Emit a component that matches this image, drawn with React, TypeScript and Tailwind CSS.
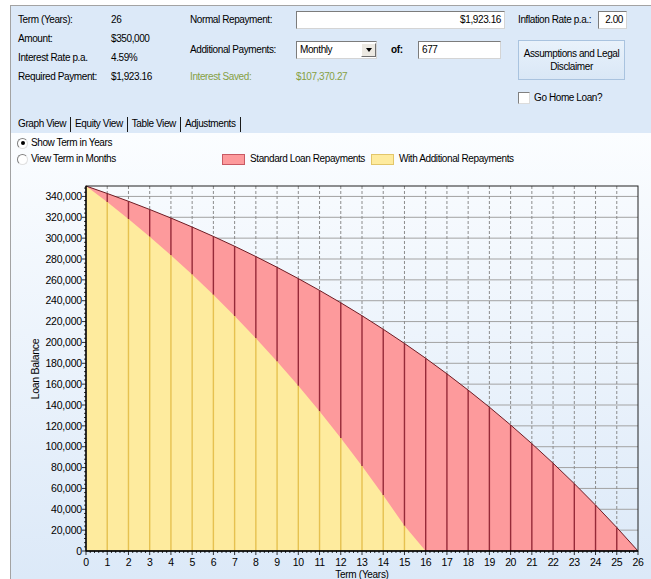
import React from 'react';

const FONT = "'Liberation Sans',Arial,sans-serif";

// chart frame, in page pixels
const X0 = 86;
const X1 = 638;
const Y0 = 551;
const Y1 = 186;
const sx = (t: number) => X0 + (t * (X1 - X0)) / 26;
const sy = (v: number) => Y0 - (v * (Y0 - Y1)) / 350000;

function balances(pay: number) {
  const r = 0.0459 / 12;
  let b = 350000;
  const out = [b];
  for (let y = 1; y <= 26; y++) {
    for (let m = 0; m < 12; m++) {
      b = b * (1 + r) - pay;
      if (b < 0) b = 0;
    }
    out.push(b);
  }
  return out;
}

const std = balances(1923.16);
const add = balances(1923.16 + 677);

const Sunken: React.FC<{ className?: string; children?: React.ReactNode }> = ({ className = '', children }) => (
  <div
    className={`h-[18px] bg-white border border-t-[#7c7c7c] border-l-[#7c7c7c] border-b-[#d4d4d4] border-r-[#d4d4d4] flex items-center px-[3px] ${className}`}
  >
    {children}
  </div>
);

const Chart: React.FC = () => {
  const years = Array.from({ length: 27 }, (_, i) => i);
  const gridV = Array.from({ length: 17 }, (_, i) => (i + 1) * 20000);
  const minorY = Array.from({ length: 88 }, (_, i) => i * 4000);
  const minorX = Array.from({ length: 131 }, (_, i) => i * 0.2);

  const stdPts = years.map((i) => `${sx(i)},${sy(std[i])}`).join(' ');
  const addPts = years.map((i) => `${sx(i)},${sy(add[i])}`).join(' ');
  const base = `${sx(26)},${Y0} ${sx(0)},${Y0}`;

  return (
    <svg width={640} height={412} viewBox="11 167 640 412" fontFamily={FONT} fontSize={10.5}>
      {/* grid */}
      {gridV.map((v) => (
        <line key={v} x1={X0} x2={X1} y1={sy(v)} y2={sy(v)} stroke="#a3a3a3" strokeWidth={1} />
      ))}
      {years.slice(1, 26).map((i) => (
        <line key={i} x1={sx(i)} x2={sx(i)} y1={Y1} y2={Y0} stroke="#8c8c8c" strokeWidth={1} strokeDasharray="3 2" />
      ))}

      {/* areas */}
      <polygon points={`${stdPts} ${base}`} fill="#fd9a9c" />
      <polygon points={`${addPts} ${base}`} fill="#feeb9e" />

      {years.slice(1, 26).map((i) => (
        <g key={i}>
          <line x1={sx(i)} x2={sx(i)} y1={sy(std[i])} y2={sy(add[i])} stroke="#962a38" strokeWidth={1.4} />
          {add[i] > 0 && (
            <line x1={sx(i)} x2={sx(i)} y1={sy(add[i])} y2={Y0} stroke="#e6c150" strokeWidth={1.4} />
          )}
        </g>
      ))}
      <polyline points={stdPts} fill="none" stroke="#6e1c24" strokeWidth={1} />

      {/* frame */}
      <rect x={X0} y={Y1} width={X1 - X0} height={Y0 - Y1} fill="none" stroke="#222" strokeWidth={1} />
      <line x1={X0} x2={X0} y1={Y1} y2={Y0} stroke="#000" strokeWidth={1.3} />
      <line x1={X0} x2={X1} y1={Y0} y2={Y0} stroke="#000" strokeWidth={1.3} />

      {/* y ticks */}
      {minorY.map((v) => (
        <line key={v} x1={v % 20000 === 0 ? X0 - 4 : X0 - 2} x2={X0} y1={sy(v)} y2={sy(v)} stroke="#000" strokeWidth={0.8} />
      ))}
      {[0, ...gridV].map((v) => (
        <text key={v} x={82} y={sy(v)} dy="0.36em" textAnchor="end" fill="#000" letterSpacing={-0.2}>
          {v.toLocaleString('en-US')}
        </text>
      ))}

      {/* x ticks */}
      {minorX.map((t, k) => (
        <line key={k} x1={sx(t)} x2={sx(t)} y1={Y0} y2={k % 5 === 0 ? Y0 + 4 : Y0 + 2} stroke="#000" strokeWidth={0.8} />
      ))}
      {years.map((i) => (
        <text key={i} x={sx(i)} y={566} textAnchor="middle" fill="#000">
          {i}
        </text>
      ))}

      <text x={362} y={578} textAnchor="middle" fill="#000" fontSize={10} letterSpacing={-0.3}>
        Term (Years)
      </text>
      <text x={39} y={369} textAnchor="middle" fill="#000" letterSpacing={-0.3} transform="rotate(-90 39 369)">
        Loan Balance
      </text>
    </svg>
  );
};

const Radio: React.FC<{ checked?: boolean; label: string }> = ({ checked, label }) => (
  <div className="flex items-center h-[16px]">
    <div className="w-[11px] h-[11px] rounded-full bg-white border border-t-[#808080] border-l-[#808080] border-b-[#e0e0e0] border-r-[#e0e0e0] flex items-center justify-center">
      {checked && <div className="w-[4px] h-[4px] rounded-full bg-black" />}
    </div>
    <span className="ml-[3px]">{label}</span>
  </div>
);

export default function App() {
  const infoRows = [
    ['Term (Years):', '26'],
    ['Amount:', '$350,000'],
    ['Interest Rate p.a.', '4.59%'],
    ['Required Payment:', '$1,923.16'],
  ];

  return (
    <div
      className="w-[651px] h-[579px] bg-white overflow-hidden pl-[10px] pt-[5px] text-[10px] tracking-[-0.4px] text-black leading-none whitespace-nowrap"
      style={{ fontFamily: FONT }}
    >
      <div className="h-full border-l border-t border-[#a3a3a3] flex flex-col">
        {/* top panel */}
        <div className="bg-[#dce9f8] h-[127px] flex flex-col pl-[7px] shrink-0">
          <div className="flex pt-[4px]">
            <div className="flex flex-col">
              {infoRows.map(([l, v]) => (
                <div key={l} className="flex items-center h-[19px]">
                  <span className="w-[93px]">{l}</span>
                  <span className="w-[79px]">{v}</span>
                </div>
              ))}
            </div>

            <div className="flex flex-col w-[328px]">
              <div className="flex items-center h-[19px]">
                <span className="w-[106px]">Normal Repayment:</span>
                <Sunken className="w-[209px] justify-end">$1,923.16</Sunken>
              </div>
              <div className="flex items-center h-[19px] mt-[11px]">
                <span className="w-[106px]">Additional Payments:</span>
                <Sunken className="w-[81px] !pr-0 justify-between">
                  <span>Monthly</span>
                  <div className="w-[15px] h-[14px] bg-[#ece9e2] border border-t-white border-l-white border-b-[#707070] border-r-[#707070] flex items-center justify-center">
                    <div className="w-0 h-0 border-l-[3.5px] border-r-[3.5px] border-t-[4px] border-l-transparent border-r-transparent border-t-black" />
                  </div>
                </Sunken>
                <span className="ml-[14px] font-bold w-[27px]">of:</span>
                <Sunken className="w-[83px]">677</Sunken>
              </div>
              <div className="flex items-center h-[19px] mt-[8px] text-[#86a044]">
                <span className="w-[106px]">Interest Saved:</span>
                <span>$107,370.27</span>
              </div>
            </div>

            <div className="flex flex-col">
              <div className="flex items-center h-[19px]">
                <span className="w-[80px]">Inflation Rate p.a.:</span>
                <Sunken className="w-[29px] justify-end">2.00</Sunken>
              </div>
              <div className="mt-[11px] w-[107px] h-[40px] border border-[#a9c3df] bg-linear-to-b from-[#e9f2fb] to-[#d9e7f6] flex items-center justify-center text-center leading-[13px]">
                Assumptions and Legal
                <br />
                Disclaimer
              </div>
              <div className="mt-[9px] h-[17px] flex items-center">
                <div className="w-[12px] h-[12px] bg-white border border-t-[#808080] border-l-[#808080] border-b-[#dcdcdc] border-r-[#dcdcdc]" />
                <span className="ml-[4px]">Go Home Loan?</span>
              </div>
            </div>
          </div>

          {/* tabs */}
          <div className="mt-auto mb-[1px] h-[16px] flex items-center">
            {['Graph View', 'Equity View', 'Table View', 'Adjustments'].map((t) => (
              <React.Fragment key={t}>
                <span>{t}</span>
                <span className="w-px h-[15px] bg-[#1a1a1a] mx-[4px]" />
              </React.Fragment>
            ))}
          </div>
        </div>

        {/* graph area */}
        <div className="flex-1 bg-linear-to-b from-[#fbfdff] to-[#dce9f8] flex flex-col pl-[6px] pt-[2px] overflow-hidden">
          <Radio checked label="Show Term in Years" />
          <div className="flex items-center h-[16px]">
            <div className="w-[205px]">
              <Radio label="View Term in Months" />
            </div>
            <div className="w-[23px] h-[11px] bg-[#fd9a9c] border border-[#c85a64]" />
            <span className="ml-[5px] w-[121px]">Standard Loan Repayments</span>
            <div className="w-[23px] h-[11px] bg-[#feeb9e] border border-[#e2c66a]" />
            <span className="ml-[5px]">With Additional Repayments</span>
          </div>
          <div className="-ml-[6px]">
            <Chart />
          </div>
        </div>
      </div>
    </div>
  );
}
